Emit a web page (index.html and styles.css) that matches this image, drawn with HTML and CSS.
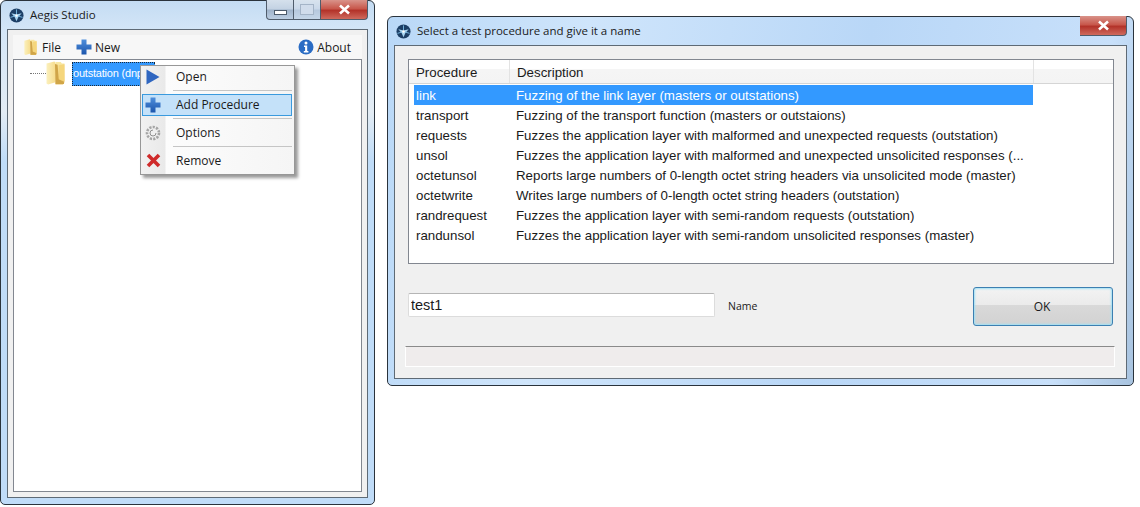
FILE: index.html
```html
<!DOCTYPE html>
<html lang="en">
<head>
    <meta charset="UTF-8">
    <meta name="viewport" content="width=device-width, initial-scale=1.0">
    <title>Aegis Studio</title>
    <link rel="stylesheet" href="styles.css">
</head>
<body>
    <svg class="defs" width="0" height="0" aria-hidden="true">
        <defs>
            <linearGradient id="folder-grad" x1="0" y1="0" x2="1" y2="0">
                <stop offset="0" stop-color="#fbf0bd"/>
                <stop offset="1" stop-color="#f6dc8c"/>
            </linearGradient>
            <linearGradient id="folder-back" x1="0" y1="0" x2="0" y2="1">
                <stop offset="0" stop-color="#f9e9a6"/>
                <stop offset="1" stop-color="#eec466"/>
            </linearGradient>
            <linearGradient id="plus-grad" x1="0" y1="0" x2="0" y2="1">
                <stop offset="0" stop-color="#4f8fdc"/>
                <stop offset="1" stop-color="#1c55ac"/>
            </linearGradient>
            <symbol id="app-icon" viewBox="0 0 16 16">
                <circle cx="8" cy="8" r="7.500" fill="#1d3f66"/>
                <path d="M2.500 5.500L8 7l5.500-1.500L10 9.500 8 14 6 9.500z" fill="#a9d6f2"/>
                <path d="M8 1.500v5M1.500 10l5-1.500M14.500 10l-5-1.500" stroke="#7ab8e0" stroke-width="1"/>
                <circle cx="8" cy="8" r="1.300" fill="#fff"/>
            </symbol>
            <symbol id="folder-icon" viewBox="0 0 18 26" preserveAspectRatio="none">
                <path d="M0.500 2.500L8 0.500 9 2v20l-7 2.500-1.500-1z" fill="url(#folder-grad)"/>
                <path d="M9 1h5l1 1.500h2.500V22L16 24.500H9z" fill="url(#folder-back)"/>
                <path d="M8.500 3L11 4l1 15 5 2.500V24H9z" fill="#d0a548"/>
                <path d="M12 4.500l5.500-1V21l-5-2z" fill="#f5d67c"/>
            </symbol>
            <symbol id="plus-icon" viewBox="0 0 16 16">
                <path d="M5.500 0.500h5v5h5v5h-5v5h-5v-5h-5v-5h5z" fill="url(#plus-grad)"/>
            </symbol>
        </defs>
    </svg>

    <div class="desktop">
        <!-- main window -->
        <div class="window studio">
            <div class="titlebar">
                <svg class="app-icon"><use href="#app-icon"/></svg>
                <span class="title">Aegis Studio</span>
                <div class="caption">
                    <span class="cap-btn cap-min"><i></i></span>
                    <span class="cap-btn cap-max"><i></i></span>
                    <span class="cap-btn cap-close">
                        <svg width="13" height="11" viewBox="0 0 13 11"><path d="M2 1.500l9 8M11 1.500l-9 8" stroke="#fff" stroke-width="2.600"/></svg>
                    </span>
                </div>
            </div>
            <div class="client">
                <div class="toolbar">
                    <div class="tool tool-file">
                        <svg class="tool-folder"><use href="#folder-icon"/></svg>
                        <span>File</span>
                    </div>
                    <div class="tool tool-new">
                        <svg class="tool-plus"><use href="#plus-icon"/></svg>
                        <span>New</span>
                    </div>
                    <div class="tool tool-about">
                        <svg class="tool-info" viewBox="0 0 16 16">
                            <circle cx="8" cy="8" r="7.500" fill="#2a6cc4"/>
                            <circle cx="8" cy="4" r="1.500" fill="#fff"/>
                            <path d="M6 6.500h3.200V12h1.200v1.400H5.800V12h1.300V7.900H6z" fill="#fff"/>
                        </svg>
                        <span>About</span>
                    </div>
                </div>
                <div class="tree">
                    <div class="tree-node">
                        <span class="tree-dots"></span>
                        <svg class="tree-folder"><use href="#folder-icon"/></svg>
                        <span class="tree-label">outstation (dnp3)</span>
                    </div>
                </div>
            </div>

            <!-- context menu -->
            <div class="menu">
                <div class="menu-item">
                    <span class="menu-icon">
                        <svg width="14" height="16" viewBox="0 0 14 16"><path d="M0.500 0.500L13.500 8 0.500 15.500z" fill="#2f66c0"/></svg>
                    </span>
                    <span>Open</span>
                </div>
                <div class="menu-item active">
                    <span class="menu-icon">
                        <svg width="16" height="16"><use href="#plus-icon"/></svg>
                    </span>
                    <span>Add Procedure</span>
                </div>
                <div class="menu-item">
                    <span class="menu-icon">
                        <svg width="16" height="16" viewBox="0 0 16 16">
                            <circle cx="8" cy="8" r="6" fill="#f0f0f0" stroke="#a5a5a5" stroke-width="2.600" stroke-dasharray="2.200 1.200"/>
                            <path d="M11 8a3 3 0 1 1-3-3" fill="none" stroke="#8f8f8f"/>
                        </svg>
                    </span>
                    <span>Options</span>
                </div>
                <div class="menu-item">
                    <span class="menu-icon">
                        <svg width="15" height="15" viewBox="0 0 15 15"><path d="M2 2l11 11M13 2L2 13" stroke="#cf2a2a" stroke-width="3.600"/></svg>
                    </span>
                    <span>Remove</span>
                </div>
            </div>
        </div>

        <!-- procedure dialog -->
        <div class="window dialog">
            <div class="titlebar">
                <svg class="app-icon"><use href="#app-icon"/></svg>
                <span class="title">Select a test procedure and give it a name</span>
                <div class="caption">
                    <span class="cap-btn cap-close">
                        <svg width="13" height="11" viewBox="0 0 13 11"><path d="M2 1.500l9 8M11 1.500l-9 8" stroke="#fff" stroke-width="2.600"/></svg>
                    </span>
                </div>
            </div>
            <div class="client">
                <div class="list">
                    <div class="list-head">
                        <span class="head-cell head-proc">Procedure</span>
                        <span class="head-cell head-desc">Description</span>
                        <span class="head-cell head-rest"></span>
                    </div>
                    <div class="list-row selected"><span>link</span><span>Fuzzing of the link layer (masters or outstations)</span></div>
                    <div class="list-row"><span>transport</span><span>Fuzzing of the transport function (masters or outstaions)</span></div>
                    <div class="list-row"><span>requests</span><span>Fuzzes the application layer with malformed and unexpected requests (outstation)</span></div>
                    <div class="list-row"><span>unsol</span><span>Fuzzes the application layer with malformed and unexpected unsolicited responses (...</span></div>
                    <div class="list-row"><span>octetunsol</span><span>Reports large numbers of 0-length octet string headers via unsolicited mode (master)</span></div>
                    <div class="list-row"><span>octetwrite</span><span>Writes large numbers of 0-length octet string headers (outstation)</span></div>
                    <div class="list-row"><span>randrequest</span><span>Fuzzes the application layer with semi-random requests (outstation)</span></div>
                    <div class="list-row"><span>randunsol</span><span>Fuzzes the application layer with semi-random unsolicited responses (master)</span></div>
                </div>
                <div class="name-row">
                    <input class="name-input" type="text" value="test1">
                    <label class="name-label">Name</label>
                    <button class="ok-btn">OK</button>
                </div>
                <div class="statusbar"></div>
            </div>
        </div>
    </div>
</body>
</html>
```

FILE: styles.css
```css
html, body {
    margin: 0;
    padding: 0;
    background-color: #fff;
    overflow: hidden;
}
.defs {
    position: absolute;
}
.desktop {
    display: flex;
    align-items: flex-start;
    gap: 12px;
    width: 1140px;
    height: 507px;
    font-family: "Open Sans", "Noto Sans", sans-serif;
    color: #1a1a1a;
}

/* window frame */
.window {
    position: relative;
    display: flex;
    flex-direction: column;
    box-sizing: border-box;
    border: 1px solid #2a333c;
    border-radius: 6px 6px 5px 5px;
    padding: 0 6px 6px;
    background: linear-gradient(100deg, #b9d8f7 0%, #cfe5fb 25%, #b9d7f7 60%, #c8e0fa 90%, #a8c3df 100%);
}
.studio {
    width: 375px;
    height: 505px;
    background: linear-gradient(180deg, #c4dcf3 0%, #d4e6f7 6%, #e3ecf4 22%, #bfdcf8 32%, #c0dcf8 100%);
}
.dialog {
    width: 747px;
    height: 370px;
    margin-top: 16px;
}
.titlebar {
    display: flex;
    align-items: flex-start;
    height: 28px;
    flex-shrink: 0;
}
.app-icon {
    width: 15px;
    height: 15px;
    margin: 7px 6px 0 2px;
}
.title {
    font-size: 11.5px;
    line-height: 16px;
    margin-top: 6px;
}
.caption {
    display: flex;
    margin-left: auto;
    margin-top: -1px;
    height: 20px;
}
.cap-btn {
    display: flex;
    align-items: center;
    justify-content: center;
    box-sizing: border-box;
    height: 20px;
    border: 1px solid #4f5c6b;
    border-top: none;
}
.cap-min {
    width: 28px;
    border-radius: 0 0 0 4px;
    background: linear-gradient(180deg, #d5e0ec 0%, #c3d2e3 48%, #9fb3ca 52%, #bccee2 100%);
}
.cap-min i {
    display: block;
    width: 11px;
    height: 3px;
    margin-top: 6px;
    background-color: #fff;
    border: 1px solid #4c5a6a;
}
.cap-max {
    width: 27px;
    border-left: none;
    background: linear-gradient(180deg, #d8e3ee 0%, #c9d8e9 48%, #b6c8dd 52%, #c5d6e8 100%);
}
.cap-max i {
    display: block;
    width: 12px;
    height: 9px;
    border: 1px solid #a4b4c7;
    background-color: #d0dceb;
}
.cap-close {
    width: 47px;
    border-left: none;
    border-radius: 0 0 4px 0;
    background: linear-gradient(180deg, #d9938a 0%, #c8584c 45%, #b3332a 55%, #cf6a5d 100%);
}
.client {
    flex: 1;
    box-sizing: border-box;
    border: 1px solid #5e6a75;
    background-color: #f0f0f0;
}

/* toolbar + tree */
.studio .client {
    display: flex;
    flex-direction: column;
    padding: 5px;
}
.toolbar {
    display: flex;
    align-items: center;
    height: 24px;
    flex-shrink: 0;
    font-size: 12px;
    background-color: #f7f7f7;
    padding-left: 11px;
}
.tool {
    display: flex;
    align-items: center;
}
.tool-folder {
    width: 13px;
    height: 17px;
    margin-right: 5px;
}
.tool-plus {
    width: 16px;
    height: 16px;
    margin-right: 3px;
}
.tool-info {
    width: 16px;
    height: 16px;
    margin-right: 3px;
}
.tool-new {
    margin-left: 15px;
}
.tool-about {
    margin-left: auto;
    margin-right: 11px;
}
.tree {
    flex: 1;
    box-sizing: border-box;
    border: 1px solid #828790;
    background-color: #fff;
}
.tree-node {
    display: flex;
    align-items: center;
    padding: 1px 0 0 16px;
    height: 25px;
}
.tree-dots {
    width: 16px;
    border-top: 1px dotted #777;
}
.tree-folder {
    width: 19px;
    height: 25px;
    margin: 0 7px 0 0;
}
.tree-label {
    box-sizing: border-box;
    width: 83px;
    height: 24px;
    line-height: 21px;
    font-family: "Liberation Sans", Arial, sans-serif;
    font-size: 11px;
    letter-spacing: -0.2px;
    white-space: nowrap;
    color: #fff;
    background-color: #3399ff;
    border: 1px dotted #1a2a3a;
}

/* context menu */
.menu {
    position: absolute;
    left: 139px;
    top: 64px;
    box-sizing: border-box;
    width: 155px;
    height: 110px;
    padding: 0 1px;
    border: 1px solid #979797;
    background: linear-gradient(90deg, #f1f1f1 0, #e9e9e9 24px, #fcfcfc 25px, #f5f5f5 100%);
    box-shadow: 3px 3px 3px rgba(0, 0, 0, 0.4);
    font-size: 12px;
}
.menu-item {
    position: relative;
    display: flex;
    align-items: center;
    box-sizing: border-box;
    height: 22px;
    margin: 0 1px 6px 0;
    padding-bottom: 1px;
    border: 1px solid transparent;
}
.menu-item:last-child {
    margin-bottom: 0;
}
.menu-item:not(:last-child)::after {
    content: "";
    position: absolute;
    left: 30px;
    right: -1px;
    bottom: -4px;
    border-top: 1px solid #c5c5c5;
}
.menu-item.active {
    background-color: #c4e1f9;
    border-color: #3a9ade;
}
.menu-icon {
    display: flex;
    align-items: center;
    justify-content: center;
    width: 20px;
    margin-right: 13px;
}

/* dialog */
.dialog .client {
    display: flex;
    flex-direction: column;
    padding: 13px 11px 10px 10px;
}
.list {
    box-sizing: border-box;
    width: 706px;
    height: 205px;
    flex-shrink: 0;
    margin-left: 3px;
    border: 1px solid #828790;
    background-color: #fff;
    font-family: "Liberation Sans", Arial, sans-serif;
    font-size: 13.3px;
}
.list-head {
    display: flex;
    height: 24px;
    margin-bottom: 1px;
    box-sizing: border-box;
    border-bottom: 1px solid #d5d5d5;
    background: linear-gradient(180deg, #fff 0%, #fff 40%, #f5f5f5 41%, #f4f4f4 100%);
}
.head-cell {
    box-sizing: border-box;
    line-height: 26px;
    padding-left: 7px;
    border-right: 1px solid #e3e3e3;
}
.head-proc {
    width: 101px;
}
.head-desc {
    width: 524px;
}
.head-rest {
    flex: 1;
    border-right: none;
}
.list-row {
    display: grid;
    grid-template-columns: 95px 524px;
    margin-left: 5px;
    width: 619px;
    height: 20px;
    line-height: 21px;
    white-space: nowrap;
}
.list-row span {
    padding-left: 7px;
    overflow: hidden;
}
.list-row span:first-child {
    padding-left: 2px;
}
.list-row.selected {
    color: #fff;
    background-color: #3399ff;
}
.name-row {
    display: flex;
    align-items: center;
    height: 39px;
    margin: 23px 0 20px 3px;
}
.name-input {
    box-sizing: border-box;
    width: 307px;
    height: 24px;
    margin-bottom: 4px;
    padding: 0 2px;
    border: 1px solid #dcdcdc;
    border-top-color: #b5b5b5;
    border-radius: 2px;
    background-color: #fff;
    font-family: "Liberation Sans", Arial, sans-serif;
    font-size: 14.5px;
    color: #1a1a1a;
    outline: none;
}
.name-label {
    margin-left: 13px;
    margin-bottom: 2px;
    font-size: 10.5px;
}
.ok-btn {
    box-sizing: border-box;
    width: 140px;
    height: 39px;
    margin-left: auto;
    margin-right: 2px;
    padding-right: 8px;
    border: 1px solid #3c7fb1;
    border-radius: 3px;
    box-shadow: inset 0 0 2px 1px #9fe0f5;
    background: linear-gradient(180deg, #f3f3f3 0%, #ebebeb 45%, #d9d9d9 46%, #d2d2d2 100%);
    font-family: "Open Sans", "Noto Sans", sans-serif;
    font-size: 12px;
    color: #1a1a1a;
}
.statusbar {
    box-sizing: border-box;
    height: 21px;
    border: 1px solid #fff;
    border-top-color: #8a8a8a;
    background-color: #efecec;
}
```
